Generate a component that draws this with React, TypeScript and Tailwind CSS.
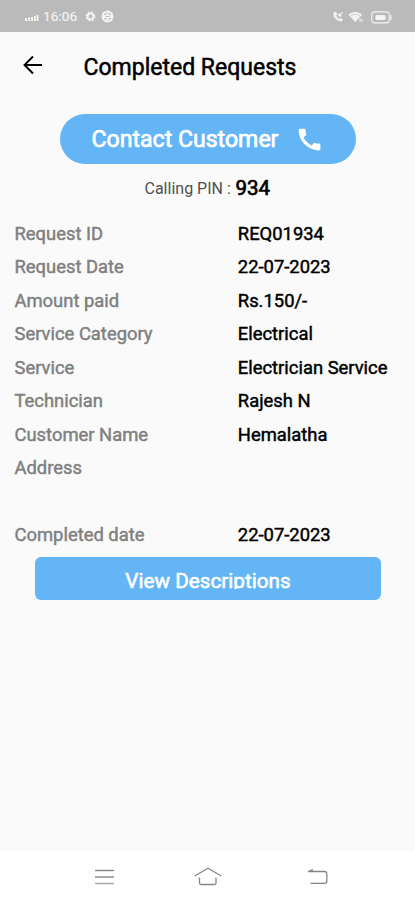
import { clsx } from 'clsx';

interface Detail {
  label: string;
  value: string;
}

const details: Detail[] = [
  { label: 'Request ID', value: 'REQ01934' },
  { label: 'Request Date', value: '22-07-2023' },
  { label: 'Amount paid', value: 'Rs.150/-' },
  { label: 'Service Category', value: 'Electrical' },
  { label: 'Service', value: 'Electrician Service' },
  { label: 'Technician', value: 'Rajesh N' },
  { label: 'Customer Name', value: 'Hemalatha' },
  { label: 'Address', value: '' },
  { label: 'Completed date', value: '22-07-2023' },
];

function StatusBar() {
  return (
    <div className="flex h-8 items-center justify-between bg-[#bababa] pt-[2px] pr-[23px] pl-[25px] text-[#f3f3f3]">
      <div className="flex items-center">
        <svg width="14" height="8" viewBox="0 0 14 8" fill="currentColor" className="mt-[3px]">
          <rect x="0" y="4" width="2" height="3" />
          <rect x="3" y="3.500" width="2" height="3.500" />
          <rect x="6" y="3" width="2" height="4" />
          <rect x="9" y="2" width="1.800" height="5" />
          <rect x="11.600" y="1" width="1.800" height="6" />
        </svg>
        <span className="ml-[4px] w-[42px] text-[13.7px] leading-none [-webkit-text-stroke:0.2px]">16:06</span>
        <svg width="11" height="11" viewBox="0 0 12 12" fill="none" stroke="currentColor">
          <circle cx="6" cy="6" r="3.2" strokeWidth="2.2" />
          <circle cx="6" cy="6" r="4.7" strokeWidth="1.6" strokeDasharray="1.9 1.8" />
        </svg>
        <svg width="13" height="13" viewBox="0 0 13 13" className="ml-[5px]">
          <circle cx="6.5" cy="6.5" r="6" fill="currentColor" />
          <path d="M5 2.500v2H3M8 2.500v2h2M5 10.500v-2H3M8 10.500v-2h2M4.500 6.500h4" stroke="#bababa" strokeWidth=".9" fill="none" />
        </svg>
      </div>
      <div className="flex items-center">
        <svg width="12" height="12" viewBox="0 0 12 12" fill="none" stroke="currentColor">
          <path d="M1.700 1.500c-.7 4.600 3.100 8.800 8 8.700l.8-1.800-2.200-1.200-1.200 1C5.600 7.400 4.500 6 4 4.500l1-1.100L3.800 1z" fill="currentColor" strokeWidth=".5" />
          <path d="M10.500 1.500L7 5M7 2.500V5h2.700" strokeWidth="1.200" />
        </svg>
        <svg width="15" height="12" viewBox="0 0 15 12" className="ml-[4px]">
          <path d="M.5 3.800C4.200.2 10.300.2 14 3.800L7.200 11z" fill="currentColor" />
          <path d="M2.300 5.200c2.800-2.500 7-2.500 9.800 0" fill="none" stroke="#bababa" strokeWidth=".7" />
          <path d="M12 7v4M14 8v3" stroke="currentColor" strokeWidth="1" />
        </svg>
        <svg width="21" height="13" viewBox="0 0 21 13" className="ml-[8px]">
          <rect x=".7" y=".9" width="17.600" height="11" rx="3" fill="none" stroke="currentColor" strokeWidth="1.100" />
          <rect x="4.500" y="4" width="10" height="5" rx="1.500" fill="currentColor" />
          <path d="M20 4v5" stroke="currentColor" strokeWidth="1.200" />
        </svg>
      </div>
    </div>
  );
}

function NavBar() {
  return (
    <div className="flex h-[49px] items-center justify-between bg-white pt-[3px] pr-[87px] pl-[95px] text-[#858585]">
      <svg width="19" height="18" viewBox="0 0 19 18" stroke="currentColor" strokeWidth="1.4">
        <path d="M0 2.500h19" />
        <path d="M0 9h19" />
        <path d="M0 15.500h19" stroke="#a5a5a5" />
      </svg>
      <svg width="28" height="20" viewBox="0 0 28 20" fill="none" stroke="currentColor" strokeWidth="1.3" className="mr-[5px]">
        <path d="M.8 9L13 1.700c.6-.4 1.400-.4 2 0L27.200 9" />
        <path d="M5.500 10.500V16c0 .8.600 1.500 1.500 1.500h13.500c.8 0 1.500-.7 1.500-1.500v-5.500" />
      </svg>
      <svg width="21" height="18" viewBox="0 0 21 18" fill="none" stroke="currentColor" strokeWidth="1.3">
        <path d="M1.500 3.500h16c1.300 0 2.300 1 2.300 2.300v7.200c0 1.300-1 2.300-2.300 2.300H3.500" />
        <path d="M1 3.500l4.500-2.300v2.300z" fill="currentColor" strokeWidth=".6" />
      </svg>
    </div>
  );
}

export default function App() {
  return (
    <div className="flex h-[900px] w-[415px] flex-col overflow-hidden bg-[#fafafa] font-['Roboto',sans-serif] text-black">
      <StatusBar />

      {/* App bar */}
      <header className="flex h-[68px] items-center pl-[23px]">
        <svg width="20" height="20" viewBox="0 0 20 20" fill="none" stroke="currentColor" strokeWidth="1.9" className="mb-[2px]">
          <path d="M19 10H2M10 1.500L1.500 10l8.500 8.500" />
        </svg>
        <h1 className="ml-[40.5px] pt-[2px] text-[23px] leading-none whitespace-nowrap [-webkit-text-stroke:0.5px]">Completed Requests</h1>
      </header>

      <main className="flex flex-1 flex-col">
        <button className="mx-auto mt-[14px] flex h-[50px] w-[296px] items-center rounded-full bg-[#64b5f6] pl-[32px] text-[23.1px] whitespace-nowrap text-white [-webkit-text-stroke:0.7px]">
          <span className="w-[203px] pt-[2px] text-left">Contact Customer</span>
          <svg width="29" height="29" viewBox="0 0 24 24" fill="currentColor" className="mt-px">
            <path d="M20.010 15.380c-1.230 0-2.420-.2-3.530-.56-.35-.12-.74-.03-1.010.24l-1.570 1.970c-2.830-1.350-5.480-3.900-6.890-6.830l1.950-1.660c.27-.28.35-.67.240-1.020-.37-1.110-.56-2.300-.56-3.530 0-.54-.45-.99-.99-.99H4.190C3.650 3 3 3.240 3 3.990 3 13.280 10.730 21 20.010 21c.71 0 .99-.63.99-1.180v-3.450c0-.54-.45-.99-.99-.99z" />
          </svg>
        </button>

        <p className="flex h-[53px] items-center pb-[5px] pl-[144.5px] whitespace-nowrap">
          <span className="w-[91px] pt-px text-[16px] text-[#505050]">Calling PIN :</span>
          <span className="text-[20.5px] [-webkit-text-stroke:0.7px]">934</span>
        </p>

        <dl className="text-[18.4px] leading-none whitespace-nowrap [-webkit-text-stroke:0.45px]">
          {details.map(({ label, value }) => (
            <div
              key={label}
              className={clsx(
                'grid grid-cols-[223.3px_1fr] items-center pl-[14.5px]',
                label === 'Address' ? 'h-[67px] pb-[33.5px]' : 'h-[33.5px]'
              )}
            >
              <dt className="text-[#808080]">{label}</dt>
              <dd>{value}</dd>
            </div>
          ))}
        </dl>

        {/* The label box is shorter than its text, so descenders are cut off */}
        <button className="mt-[5px] ml-[35px] flex h-[43px] w-[346px] justify-center rounded-md bg-[#64b5f6] pt-[12px] text-[20.7px] text-white [-webkit-text-stroke:0.6px]">
          <span className="h-[20px] overflow-hidden leading-[25px] whitespace-nowrap">View Descriptions</span>
        </button>
      </main>

      <NavBar />
    </div>
  );
}
